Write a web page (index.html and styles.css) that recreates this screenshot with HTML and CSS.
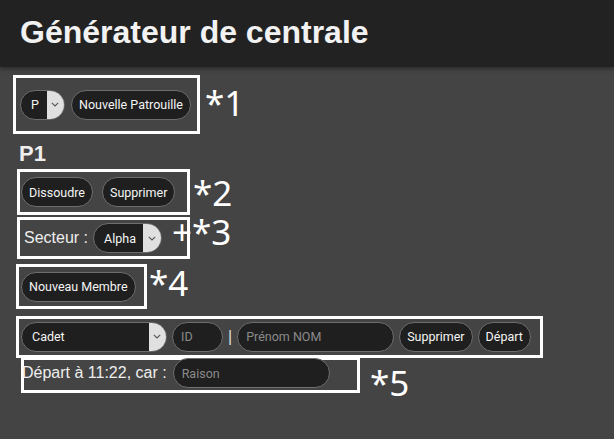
FILE: index.html
```html
<!DOCTYPE html>
<html lang="fr">
<head>
<meta charset="utf-8">
<title>Générateur de centrale</title>
<link rel="stylesheet" href="styles.css">
</head>
<body>
<header class="topbar">
  <h1 class="title">Générateur de centrale</h1>
</header>
<main class="page">
  <div class="note-row">
    <div class="note note-1">
      <div class="select select-p">
        <span class="select-value">P</span>
        <span class="select-arrow"><svg width="8" height="5" viewBox="0 0 8 5"><polyline points="0.8,0.8 4,4 7.2,0.8" fill="none" stroke="#555" stroke-width="1.1"/></svg></span>
      </div>
      <button class="btn">Nouvelle Patrouille</button>
    </div>
    <span class="note-label label-1">*1</span>
  </div>

  <h2 class="patrol-title">P1</h2>

  <div class="note-row">
    <div class="note note-2">
      <button class="btn">Dissoudre</button>
      <button class="btn">Supprimer</button>
    </div>
    <span class="note-label label-2">*2</span>
  </div>

  <div class="note-row">
    <div class="note note-3">
      <span class="field-label">Secteur :</span>
      <div class="select select-sector">
        <span class="select-value">Alpha</span>
        <span class="select-arrow select-arrow-wide"><svg width="8" height="5" viewBox="0 0 8 5"><polyline points="0.8,0.8 4,4 7.2,0.8" fill="none" stroke="#555" stroke-width="1.1"/></svg></span>
      </div>
    </div>
    <span class="note-label label-3">+*3</span>
  </div>

  <div class="note-row">
    <div class="note note-4">
      <button class="btn">Nouveau Membre</button>
    </div>
    <span class="note-label label-4">*4</span>
  </div>

  <div class="note-row">
    <div class="note note-5">
      <div class="select select-role">
        <span class="select-value">Cadet</span>
        <span class="select-arrow"><svg width="8" height="5" viewBox="0 0 8 5"><polyline points="0.8,0.8 4,4 7.2,0.8" fill="none" stroke="#555" stroke-width="1.1"/></svg></span>
      </div>
      <input class="field field-id" type="text" placeholder="ID">
      <span class="separator">|</span>
      <input class="field field-name" type="text" placeholder="Prénom NOM">
      <button class="btn">Supprimer</button>
      <button class="btn">Départ</button>
    </div>
  </div>

  <div class="note-row">
    <div class="note note-6">
      <span class="field-label field-label-tight">Départ à 11:22, car :</span>
      <input class="field field-name field-raised" type="text" placeholder="Raison">
    </div>
    <span class="note-label label-5">*5</span>
  </div>
</main>
</body>
</html>
```

FILE: styles.css
```css
html, body {
  margin: 0;
  padding: 0;
}

body {
  background: #444444;
  font-family: "Liberation Sans", Arial, sans-serif;
  color: #eeeeee;
  min-height: 439px;
}

.topbar {
  background: #222222;
  padding: 14px 20px 16px;
  box-shadow: 0 2px 4px rgba(0, 0, 0, 0.35);
}

.title {
  margin: 0;
  font-size: 32px;
  line-height: 37px;
  font-weight: bold;
  color: #f2f2f2;
}

.page {
  display: flex;
  flex-direction: column;
  align-items: flex-start;
  padding-top: 8px;
}

.note-row {
  display: flex;
  align-items: flex-start;
}

.note {
  box-sizing: border-box;
  border: 3px solid #ffffff;
  display: flex;
  align-items: center;
}

.note-1 {
  margin-left: 13px;
  width: 187px;
  height: 59px;
  padding-left: 4px;
  gap: 6px;
}

.note-2 {
  margin-left: 17px;
  width: 173px;
  height: 46px;
  padding-left: 1px;
  gap: 9px;
}

.note-3 {
  margin-top: 2px;
  margin-left: 17px;
  width: 173px;
  height: 42px;
  padding: 3px 0 0 4px;
  align-items: baseline;
  gap: 5px;
}

.note-4 {
  margin-top: 5px;
  margin-left: 16px;
  width: 131px;
  height: 45px;
  padding-left: 2px;
}

.note-5 {
  margin-top: 7px;
  margin-left: 16px;
  width: 527px;
  height: 42px;
  padding: 0 0 1px 2px;
  gap: 5px;
}

.note-6 {
  margin-top: -1px;
  margin-left: 21px;
  width: 339px;
  height: 36px;
  padding: 0;
  align-items: baseline;
  gap: 6px;
}

.note-label {
  font-family: "Noto Sans", sans-serif;
  font-size: 35px;
  line-height: 34px;
  color: #ffffff;
  white-space: nowrap;
}

.label-1 { margin: 11px 0 0 5px; }
.label-2 { margin: 7px 0 0 3px; }
.label-3 { margin: 0 0 0 -18px; }
.label-4 { margin: 7px 0 0 2px; }
.label-5 { margin: 8px 0 0 10px; }

.patrol-title {
  margin: 7px 0 3px 19px;
  font-size: 22px;
  line-height: 25px;
  font-weight: bold;
  color: #eeeeee;
}

.btn {
  box-sizing: border-box;
  height: 30px;
  padding: 0 7px;
  border: 1px solid #6e6e6e;
  border-radius: 15px;
  background: #1f1f1f;
  color: #f4f4f4;
  font-family: Roboto, "Liberation Sans", sans-serif;
  font-size: 12.5px;
  white-space: nowrap;
}

.select {
  box-sizing: border-box;
  display: flex;
  height: 30px;
  border: 1px solid #6e6e6e;
  border-radius: 15px;
  overflow: hidden;
  background: #1f1f1f;
  color: #f4f4f4;
  font-family: Roboto, "Liberation Sans", sans-serif;
  font-size: 12.5px;
}

.select-p { width: 45px; }
.select-sector { width: 69px; }
.select-role { width: 146px; }

.select-value {
  flex: 1;
  display: flex;
  align-items: center;
  padding-left: 10px;
}

.select-arrow {
  width: 16px;
  background: #e0e0e0;
  display: flex;
  align-items: center;
  justify-content: center;
  padding-right: 1px;
}

.select-arrow-wide { width: 17px; }

.field {
  box-sizing: border-box;
  height: 30px;
  padding: 0 8px;
  border: 1px solid #6e6e6e;
  border-radius: 15px;
  background: #1f1f1f;
  color: #f0f0f0;
  font-family: Roboto, "Liberation Sans", sans-serif;
  font-size: 12.5px;
  outline: none;
}

.field::placeholder {
  color: #8a8a8a;
}

.field-id { width: 51px; }
.field-name { width: 157px; }

.field-raised {
  margin-top: -2px;
}

.separator {
  font-size: 16px;
  color: #dddddd;
}

.field-label {
  font-size: 16px;
  color: #eeeeee;
  white-space: nowrap;
}

.field-label-tight {
  margin-left: -2px;
}
```
